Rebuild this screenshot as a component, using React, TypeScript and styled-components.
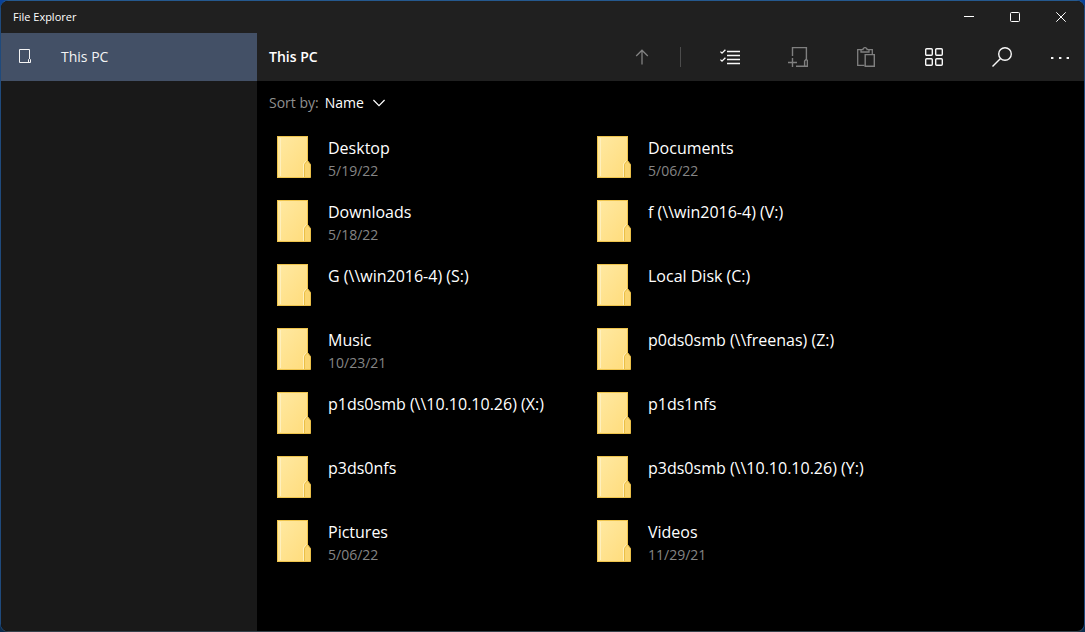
import React from "react";
import styled, { createGlobalStyle } from "styled-components";

const GlobalStyle = createGlobalStyle`
  *, *::before, *::after { box-sizing: border-box; }
  body {
    margin: 0;
    background: linear-gradient(#08429c, #0c2c4c);
    font-family: "Open Sans", "Noto Sans", sans-serif;
    color: #fff;
  }
  button, select { font: inherit; color: inherit; }
`;

const Window = styled.div`
  min-height: 100vh;
  display: flex;
  flex-direction: column;
  border: 1px solid;
  border-color: #25598f #1f4a7c #36424c #1f4a7c;
  border-radius: 8px;
  overflow: hidden;
  background: #000;
`;

const TitleBar = styled.header`
  display: flex;
  align-items: center;
  justify-content: space-between;
  height: 32px;
  padding-left: 12px;
  background: #202020;
`;

const AppName = styled.span`
  font-size: 11px;
  line-height: 16px;
`;

const Row = styled.div`
  display: flex;
  align-items: center;
`;

const BareButton = styled.button`
  display: flex;
  align-items: center;
  justify-content: center;
  padding: 0;
  border: 0;
  background: transparent;
`;

const CaptionButton = styled(BareButton)`
  width: 46px;
  height: 32px;
`;

const Body = styled.div`
  flex: 1;
  display: flex;
`;

const Sidebar = styled.nav`
  flex: 0 0 256px;
  background: #191919;
`;

const NavLink = styled.a`
  display: flex;
  align-items: center;
  gap: 28px;
  height: 48px;
  padding-left: 16px;
  background: #435066;
  color: #f4f4f4;
  font-size: 14px;
  line-height: 20px;
  text-decoration: none;
`;

const Content = styled.main`
  flex: 1;
  min-width: 0;
`;

const CommandBar = styled.div`
  display: flex;
  align-items: center;
  justify-content: space-between;
  height: 48px;
  padding-left: 12px;
  background: #202020;
`;

const Heading = styled.h1`
  margin: 0;
  font-size: 14px;
  font-weight: 600;
  line-height: 20px;
`;

const CommandButton = styled(BareButton)<{ $compact?: boolean }>`
  width: ${(p) => (p.$compact ? 48 : 68)}px;
  height: 48px;
  color: #f8f8f8;
  &:disabled { color: #808080; }
`;

const Divider = styled.span`
  width: 1px;
  height: 20px;
  margin: 0 15px 0 4px;
  background: #4c4c4c;
`;

const SortBar = styled.div`
  display: flex;
  align-items: center;
  gap: 6px;
  height: 44px;
  padding-left: 12px;
  font-size: 14px;
  line-height: 20px;
`;

const SortLabel = styled.label`
  color: #8f8f8f;
`;

const SelectBox = styled.span`
  display: grid;
  align-items: center;
  > * { grid-area: 1 / 1; }
  svg { justify-self: end; pointer-events: none; }
`;

const SortSelect = styled.select`
  appearance: none;
  width: 60px;
  height: 24px;
  padding: 0;
  border: 0;
  background: transparent;
`;

const FolderGrid = styled.ul`
  display: grid;
  grid-template-columns: repeat(auto-fill, 320px);
  margin: 0;
  padding: 0 0 0 20px;
  list-style: none;
`;

const FolderItem = styled.button`
  display: flex;
  align-items: center;
  gap: 17px;
  width: 100%;
  height: 64px;
  padding: 0;
  border: 0;
  background: transparent;
  text-align: left;
`;

const FolderText = styled.span`
  display: flex;
  flex-direction: column;
  height: 42px;
`;

const FolderName = styled.span`
  font-size: 16px;
  line-height: 24px;
`;

const FolderDate = styled.span`
  font-size: 14px;
  line-height: 22px;
  color: #858585;
`;

const folders: { name: string; date?: string }[] = [
  { name: "Desktop", date: "5/19/22" },
  { name: "Documents", date: "5/06/22" },
  { name: "Downloads", date: "5/18/22" },
  { name: "f (\\\\win2016-4) (V:)" },
  { name: "G (\\\\win2016-4) (S:)" },
  { name: "Local Disk (C:)" },
  { name: "Music", date: "10/23/21" },
  { name: "p0ds0smb (\\\\freenas) (Z:)" },
  { name: "p1ds0smb (\\\\10.10.10.26) (X:)" },
  { name: "p1ds1nfs" },
  { name: "p3ds0nfs" },
  { name: "p3ds0smb (\\\\10.10.10.26) (Y:)" },
  { name: "Pictures", date: "5/06/22" },
  { name: "Videos", date: "11/29/21" },
];

function Icon({ w, h, children }: { w: number; h: number; children: React.ReactNode }) {
  return (
    <svg width={w} height={h} viewBox={`0 0 ${w} ${h}`} fill="none" stroke="currentColor" aria-hidden="true">
      {children}
    </svg>
  );
}

function FolderIcon() {
  return (
    <svg width="34" height="42" viewBox="0 0 34 42" aria-hidden="true">
      <defs>
        <linearGradient id="face" x1="0" y1="0" x2="1" y2="1">
          <stop offset="0" stopColor="#ffe9a2" />
          <stop offset="1" stopColor="#ffdc7c" />
        </linearGradient>
      </defs>
      <path d="M0 0H31V42H0Z" fill="#efc44c" />
      <path d="M1 1H30V41H1Z" fill="url(#face)" />
      <path d="M3.5 2V40" stroke="#fff0bd" />
      <path d="M26.5 41V28L29.5 24.5" stroke="#fff0bd" fill="none" />
      <path d="M27.5 41.5V28.5L30.5 24.5L33.5 28.5V41.5Z" fill="#fbd671" stroke="#eabf48" />
    </svg>
  );
}

export default function App() {
  return (
    <>
      <GlobalStyle />
      <Window>
        <TitleBar>
          <AppName>File Explorer</AppName>
          <Row>
            <CaptionButton aria-label="Minimize">
              <Icon w={10} h={10}><path d="M0 4.5H10" /></Icon>
            </CaptionButton>
            <CaptionButton aria-label="Maximize">
              <Icon w={10} h={10}><rect x="0.5" y="0.5" width="9" height="9" rx="1" /></Icon>
            </CaptionButton>
            <CaptionButton aria-label="Close">
              <Icon w={10} h={10}><path d="M0.3 0.3L9.7 9.7M9.7 0.3L0.3 9.7" /></Icon>
            </CaptionButton>
          </Row>
        </TitleBar>
        <Body>
          <Sidebar>
            <NavLink href="#this-pc" aria-current="page">
              <Icon w={16} h={16}>
                <path d="M12.5 10V0.5H2.5V13.5H13.5V10.5L12.5 9.5L11.5 10.5V13.5" />
              </Icon>
              This PC
            </NavLink>
          </Sidebar>
          <Content>
            <CommandBar>
              <Heading>This PC</Heading>
              <Row>
                <CommandButton disabled aria-label="Up">
                  <Icon w={14} h={16}><path d="M7 15.5V1M1.2 7L7 1.2L12.8 7" strokeWidth="1.3" /></Icon>
                </CommandButton>
                <Divider />
                <CommandButton aria-label="Select">
                  <Icon w={20} h={16}>
                    <path d="M7 2.5H20M7 6.5H20M7 10.5H20M7 14.5H20" strokeWidth="1.4" />
                    <path d="M0.4 2.6L2 4.2L5.4 0.8M0.4 10.6L2 12.2L5.4 8.8" strokeWidth="1.3" />
                  </Icon>
                </CommandButton>
                <CommandButton disabled aria-label="New folder">
                  <Icon w={20} h={20}>
                    <path d="M4.5 9V0.6H18.4V12.5M8 19.3H19.4V13.5L18 12.5L16.6 14V19M0 15.5H9M4.5 11V20" strokeWidth="1.4" />
                  </Icon>
                </CommandButton>
                <CommandButton disabled aria-label="Paste">
                  <Icon w={18} h={20}>
                    <path d="M7.5 18.4H0.7V2.6H4M12 2.6H15.3V7" strokeWidth="1.3" />
                    <path d="M4 5V2.6H6V1.8Q8 -0.6 10 1.8V2.6H12V5Z" strokeWidth="1.3" />
                    <path d="M8.2 7.6H17.3V19.3H8.2Z" strokeWidth="1.4" />
                  </Icon>
                </CommandButton>
                <CommandButton aria-label="View">
                  <Icon w={18} h={18}>
                    <g strokeWidth="1.4">
                      <rect x="0.7" y="0.7" width="6.6" height="6.6" rx="1" />
                      <rect x="10.7" y="0.7" width="6.6" height="6.6" rx="1" />
                      <rect x="0.7" y="10.7" width="6.6" height="6.6" rx="1" />
                      <rect x="10.7" y="10.7" width="6.6" height="6.6" rx="1" />
                    </g>
                  </Icon>
                </CommandButton>
                <CommandButton aria-label="Search">
                  <Icon w={20} h={20}>
                    <g strokeWidth="1.4"><circle cx="13" cy="7" r="6.3" /><path d="M8.5 11.5L0.5 19.5" /></g>
                  </Icon>
                </CommandButton>
                <CommandButton $compact aria-label="More">
                  <Icon w={18} h={4}>
                    <path d="M0 3H2.4M8 3H10.4M15.6 3H18" strokeWidth="2" />
                  </Icon>
                </CommandButton>
              </Row>
            </CommandBar>
            <SortBar>
              <SortLabel htmlFor="sort">Sort by:</SortLabel>
              <SelectBox>
                <SortSelect id="sort" defaultValue="Name">
                  <option>Name</option>
                  <option>Date</option>
                </SortSelect>
                <Icon w={12} h={8}><path d="M0.4 1L6 6.6L11.6 1" strokeWidth="1.2" /></Icon>
              </SelectBox>
            </SortBar>
            <FolderGrid>
              {folders.map((folder) => (
                <li key={folder.name}>
                  <FolderItem>
                    <FolderIcon />
                    <FolderText>
                      <FolderName>{folder.name}</FolderName>
                      {folder.date && <FolderDate>{folder.date}</FolderDate>}
                    </FolderText>
                  </FolderItem>
                </li>
              ))}
            </FolderGrid>
          </Content>
        </Body>
      </Window>
    </>
  );
}
